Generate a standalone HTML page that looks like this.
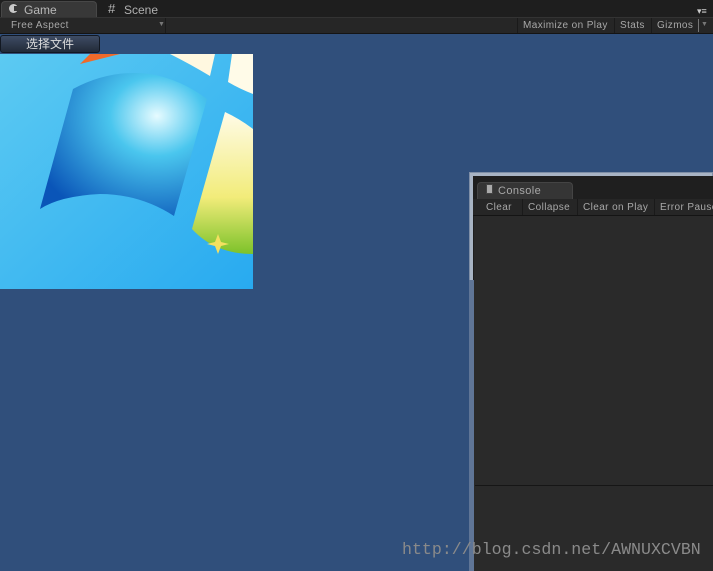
<!DOCTYPE html><html><head><meta charset="utf-8"><style>
*{margin:0;padding:0;box-sizing:border-box}
body{width:713px;height:571px;overflow:hidden;background:#304f7b;position:relative;font-family:"Liberation Sans","DejaVu Sans",sans-serif;font-size:11px;color:#a8a8a8}
.a{position:absolute}
</style></head><body>
<div class="a" style="left:0;top:0;width:713px;height:17px;background:#1e1e1e"></div>
<div class="a" style="left:1px;top:1px;width:96px;height:17px;background:#383838;border-radius:4px 4px 0 0;border:1px solid #474747;border-bottom:none"></div>
<div class="a" style="left:9px;top:4px;width:9px;height:9px;border-radius:50%;background:#c8c8c8"></div>
<div class="a" style="left:14px;top:6px;width:5px;height:5px;background:#383838"></div>
<div class="a" style="left:24px;top:3px;font-size:12px;color:#b8b8b8">Game</div>
<div class="a" style="left:108px;top:1px;font-size:13px;color:#b8b8b8">#</div>
<div class="a" style="left:124px;top:3px;font-size:12px;color:#b0b0b0">Scene</div>
<div class="a" style="left:697px;top:6px;font-size:9px;color:#ccc">▾≡</div>
<div class="a" style="left:0;top:17px;width:713px;height:17px;background:#262626;border-top:1px solid #333;border-bottom:1px solid #141414"></div>
<div class="a" style="left:5px;top:18px;width:161px;height:15px;border-right:1px solid #1a1a1a"></div>
<div class="a" style="left:11px;top:20px;font-size:10px;letter-spacing:0.4px">Free Aspect</div>
<div class="a" style="left:158px;top:21px;font-size:7px;color:#777">▼</div>
<div class="a" style="left:517px;top:18px;height:15px;border-left:1px solid #1a1a1a"></div>
<div class="a" style="left:523px;top:20px;font-size:10px;letter-spacing:0.4px">Maximize on Play</div>
<div class="a" style="left:614px;top:18px;height:15px;border-left:1px solid #1a1a1a"></div>
<div class="a" style="left:620px;top:20px;font-size:10px;letter-spacing:0.4px">Stats</div>
<div class="a" style="left:651px;top:18px;height:15px;border-left:1px solid #1a1a1a"></div>
<div class="a" style="left:657px;top:20px;font-size:10px;letter-spacing:0.4px">Gizmos</div>
<div class="a" style="left:698px;top:19px;height:13px;border-left:1px solid #777"></div>
<div class="a" style="left:701px;top:21px;font-size:7px;color:#777">▼</div>
<div class="a" style="left:0;top:35px;width:100px;height:18px;border-radius:3px;background:linear-gradient(#3e4c64,#222a38);border:1px solid #121822;color:#dcdcdc;font-family:'Liberation Sans','Noto Sans CJK SC',sans-serif;font-size:12px;text-align:center;line-height:16px">选择文件</div>
<svg class="a" style="left:0;top:54px" width="253" height="235" viewBox="0 0 253 235">
<defs>
<linearGradient id="bg" x1="0" y1="0" x2="1" y2="1"><stop offset="0" stop-color="#5ccaf2"/><stop offset="1" stop-color="#28aaf0"/></linearGradient>
<radialGradient id="p" cx="0.7" cy="0.3" r="0.8"><stop offset="0" stop-color="#e6fbff"/><stop offset="0.35" stop-color="#4ac6ee"/><stop offset="1" stop-color="#0a55b8"/></radialGradient>
<linearGradient id="y" x1="0" y1="0" x2="0" y2="1"><stop offset="0" stop-color="#fffbe8"/><stop offset="0.6" stop-color="#f2ec7a"/><stop offset="1" stop-color="#7cc22a"/></linearGradient>
</defs>
<rect width="253" height="235" fill="url(#bg)"/>
<path d="M80 10 L90 0 L120 0 Z" fill="#f06a2a"/>
<path d="M170 0 L215 0 L210 22 Q190 10 170 0Z" fill="#fff8e0"/>
<path d="M232 0 L253 0 L253 40 Q240 35 228 28Z" fill="#fffbe8"/>
<path d="M73 35 Q110 15 150 20 Q180 25 207 45 L174 162 Q140 140 100 140 Q60 142 40 155 Z" fill="url(#p)"/>
<path d="M225 58 Q240 65 253 75 L253 200 Q215 200 192 175 Z" fill="url(#y)"/>
<path d="M218 180 l3 8 l8 2 l-8 2 l-3 8 l-3 -8 l-8 -2 l8 -2z" fill="#f4e060"/>
</svg>
<div class="a" style="left:469px;top:172px;width:244px;height:399px;background:#a8b4c4;border:1px solid #7e8ea6"></div>
<div class="a" style="left:473px;top:176px;width:240px;height:395px;background:#1f1f1f"></div>
<div class="a" style="left:469px;top:280px;width:5px;height:291px;background:#5f7596"></div>
<div class="a" style="left:477px;top:182px;width:96px;height:18px;background:#353535;border-radius:4px 4px 0 0;border:1px solid #444;border-bottom:none"></div>
<div class="a" style="left:486px;top:184px;width:7px;height:10px;background:#aaa;border:1px solid #444"></div>
<div class="a" style="left:498px;top:185px;font-size:11px;letter-spacing:0.4px">Console</div>
<div class="a" style="left:473px;top:199px;width:240px;height:17px;background:#262626;border-bottom:1px solid #141414"></div>
<div class="a" style="left:486px;top:202px;font-size:10px;letter-spacing:0.4px">Clear</div>
<div class="a" style="left:522px;top:199px;height:16px;border-left:1px solid #1a1a1a"></div>
<div class="a" style="left:528px;top:202px;font-size:10px;letter-spacing:0.4px">Collapse</div>
<div class="a" style="left:577px;top:199px;height:16px;border-left:1px solid #1a1a1a"></div>
<div class="a" style="left:583px;top:202px;font-size:10px;letter-spacing:0.4px">Clear on Play</div>
<div class="a" style="left:654px;top:199px;height:16px;border-left:1px solid #1a1a1a"></div>
<div class="a" style="left:660px;top:202px;font-size:10px;letter-spacing:0.4px;white-space:nowrap">Error Pause</div>
<div class="a" style="left:474px;top:216px;width:239px;height:355px;background:#2a2a2a"></div>
<div class="a" style="left:475px;top:485px;width:238px;height:1px;background:#161616"></div>
<div class="a" style="left:402px;top:540px;font-family:'Liberation Mono',monospace;font-size:16.6px;color:#8a8a8a;white-space:nowrap">http://blog.csdn.net/AWNUXCVBN</div>
</body></html>
